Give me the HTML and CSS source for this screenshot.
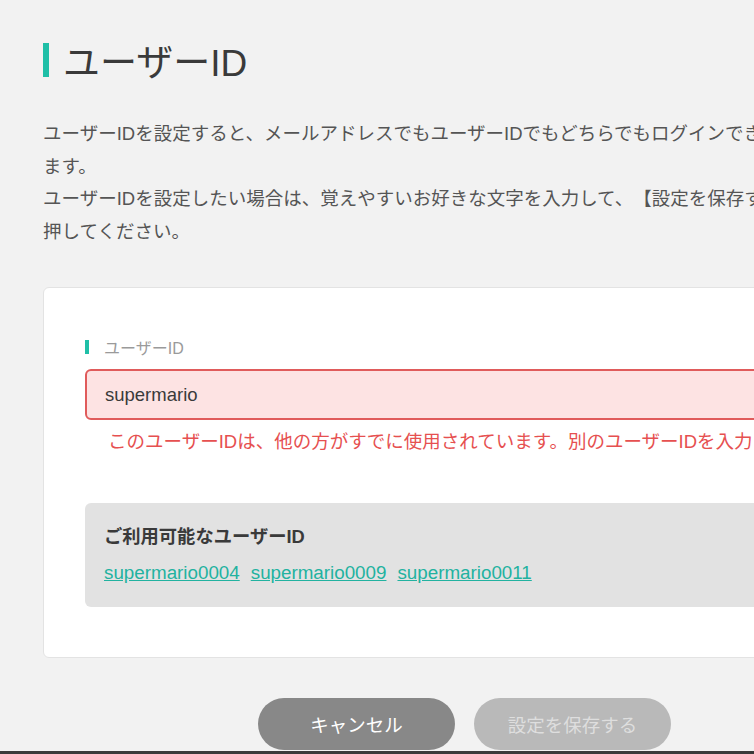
FILE: index.html
```html
<!DOCTYPE html>
<html lang="ja">
<head>
    <meta charset="UTF-8">
    <title>ユーザーID</title>
    <link rel="stylesheet" href="styles.css">
</head>
<body>
<div id="page">
    <h1 class="pageTitle">ユーザーID</h1>
    <p class="lead">
        ユーザーIDを設定すると、メールアドレスでもユーザーIDでもどちらでもログインでき<br>ます。<br>
        ユーザーIDを設定したい場合は、覚えやすいお好きな文字を入力して、【設定を保存する】を<br>押してください。
    </p>
    <div class="card">
        <div class="fieldLabel">ユーザーID</div>
        <input class="field error" type="text" value="supermario">
        <p class="errorMsg">このユーザーIDは、他の方がすでに使用されています。別のユーザーIDを入力してください。</p>
        <div class="suggest">
            <div class="suggestTitle">ご利用可能なユーザーID</div>
            <div class="suggestList">
                <a href="#">supermario0004</a>
                <a href="#">supermario0009</a>
                <a href="#">supermario0011</a>
            </div>
        </div>
    </div>
    <div class="btnRow">
        <button class="btn cancel" type="button">キャンセル</button>
        <button class="btn save" type="button" disabled>設定を保存する</button>
    </div>
</div>
<div class="winEdge"></div>
</body>
</html>
```

FILE: styles.css
```css
*{
    margin: 0;
    padding: 0;
    box-sizing: border-box;
}
html,body{
    overflow: hidden;
    height: 100%;
}
body{
    background: #f2f2f2;
    color: #444;
    font-family: "Liberation Sans", "Noto Sans CJK JP", sans-serif;
    font-size: 18.5px;
    text-spacing-trim: space-all;
}
#page{
    width: 843px;
    margin-left: 43px;
    padding-top: 40px;
}
.pageTitle{
    display: flex;
    align-items: center;
    height: 40px;
    font-size: 37px;
    font-weight: normal;
    color: #3a3a3a;
}
.pageTitle:before{
    content: "";
    width: 6px;
    height: 34px;
    margin-right: 14px;
    background: #1fbfa7;
}
.lead{
    margin-top: 38px;
    line-height: 32.5px;
    white-space: nowrap;
    color: #555;
}
.card{
    margin-top: 39px;
    padding: 49px 41px 50px;
    background: #fff;
    border: 1px solid #e3e3e3;
    border-radius: 6px;
}
.fieldLabel{
    display: flex;
    align-items: center;
    height: 20px;
    font-size: 16px;
    color: #9a9a9a;
}
.fieldLabel:before{
    content: "";
    width: 4px;
    height: 14px;
    margin-right: 15px;
    background: #1fbfa7;
}
.field{
    display: block;
    width: 100%;
    height: 51px;
    margin-top: 12px;
    padding: 0 18px;
    border: 2px solid #ddd;
    border-radius: 6px;
    font-family: inherit;
    font-size: 18.5px;
    color: #3a3a3a;
    outline: none;
}
.field.error{
    background: #fde3e3;
    border-color: #e05b5b;
}
.errorMsg{
    margin-top: 10px;
    padding-left: 23px;
    line-height: 24px;
    white-space: nowrap;
    color: #e65050;
}
.suggest{
    margin-top: 49px;
    padding: 23px 19px 22px;
    background: #e2e2e2;
    border-radius: 6px;
}
.suggestTitle{
    line-height: 22px;
    font-size: 18.3px;
    font-weight: bold;
    color: #3a3a3a;
}
.suggestList{
    display: flex;
    gap: 11px;
    margin-top: 13px;
    line-height: 24px;
    font-size: 18.8px;
}
.suggestList a{
    color: #22b2a0;
    text-decoration: underline;
}
.btnRow{
    display: flex;
    justify-content: center;
    gap: 19px;
    margin-top: 40px;
}
.btn{
    width: 197px;
    height: 52px;
    border: none;
    border-radius: 26px;
    font-family: inherit;
    font-size: 18.5px;
}
.btn.cancel{
    background: #888;
    color: #fff;
}
.btn.save{
    background: #b9b9b9;
    color: #dedede;
}
.winEdge{
    position: fixed;
    left: 0;
    right: 0;
    bottom: 0;
    height: 3px;
    background: #3a3a3a;
}
```
